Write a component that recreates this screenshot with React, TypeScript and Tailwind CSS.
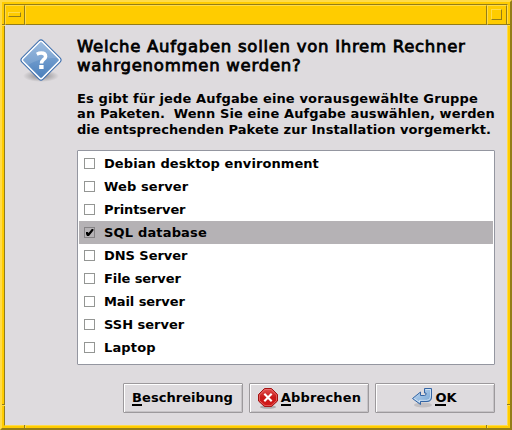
import React from "react";

const tasks = [
  { label: "Debian desktop environment", cls: "tracking-[0.08px]" },
  { label: "Web server", cls: "tracking-[0.1px]" },
  { label: "Printserver", cls: "tracking-[-0.1px]" },
  { label: "SQL database", cls: "tracking-[0.17px]", on: true },
  { label: "DNS Server", cls: "tracking-[-0.05px]" },
  { label: "File server", cls: "tracking-[-0.1px]" },
  { label: "Mail server", cls: "tracking-[-0.1px]" },
  { label: "SSH server", cls: "tracking-[0px]" },
  { label: "Laptop", cls: "tracking-[0.15px]" },
];

function QuestionIcon() {
  return (
    <svg width="46" height="46" viewBox="0 0 46 46" className="block">
      <defs>
        <linearGradient id="q" x1="0" y1="0" x2="1" y2="1">
          <stop offset="0" stopColor="#8fb3dc" />
          <stop offset="1" stopColor="#4a7fbb" />
        </linearGradient>
        <radialGradient id="qs">
          <stop offset="0" stopColor="#000" stopOpacity="0.4" />
          <stop offset="1" stopColor="#000" stopOpacity="0" />
        </radialGradient>
      </defs>
      <ellipse cx="23" cy="38" rx="18" ry="6" fill="url(#qs)" />
      <rect x="8" y="7" width="30" height="30" rx="3" transform="rotate(45 23 22)" fill="#fff" stroke="#3d6eae" strokeWidth="1" />
      <rect x="10" y="9" width="26" height="26" rx="1.2" transform="rotate(45 23 22)" fill="url(#q)" />
      <path d="M5 22 23 4.500 39 20Q22 19 10 27Z" fill="#fff" opacity="0.12" />
      <path d="M18.800 16.200Q21 15.100 23.300 15.100Q27.600 15.100 27.600 18.500Q27.600 20.400 25.300 21.800Q23.500 23.100 23.500 25.500" fill="none" stroke="#fff" strokeWidth="3.500" />
      <rect x="21.200" y="27" width="4.400" height="4" fill="#fff" />
    </svg>
  );
}

function StopIcon() {
  return (
    <svg width="22" height="22" viewBox="0 0 22 22" className="mr-[2px] block shrink-0">
      <defs>
        <linearGradient id="s" x1="0" y1="0" x2="0" y2="1">
          <stop offset="0" stopColor="#e25050" />
          <stop offset="0.5" stopColor="#c81818" />
          <stop offset="1" stopColor="#d41a1a" />
        </linearGradient>
      </defs>
      <ellipse cx="11" cy="20" rx="8" ry="1.800" fill="#000" opacity="0.22" />
      <path d="M7.500 1.500H14.500L20.500 7.500V14L14.500 19.500H7.500L1.500 14V7.500Z" fill="url(#s)" stroke="#a31212" />
      <path d="M8 2.500H14L19.500 8V13.600L14 18.600H8L2.500 13.600V8Z" fill="none" stroke="#f08080" strokeWidth="0.800" opacity="0.8" />
      <path d="M7.300 6.700 14.700 14.300M14.700 6.700 7.300 14.300" stroke="#fff" strokeWidth="2.100" />
    </svg>
  );
}

function ReturnIcon() {
  return (
    <svg width="22" height="22" viewBox="0 0 22 22" className="mr-[2px] block shrink-0">
      <defs>
        <linearGradient id="r" x1="0" y1="0" x2="1" y2="1">
          <stop offset="0" stopColor="#c5dcf3" />
          <stop offset="1" stopColor="#6f9fd0" />
        </linearGradient>
      </defs>
      <ellipse cx="12" cy="18" rx="9" ry="2.500" fill="#000" opacity="0.12" />
      <path d="M13.500 1.500H20.500V10Q20.500 14.500 16 14.500H9.500V17.500L1.500 11.500L9.500 5V8.500H13.500Q15 8.500 15 7V6H13.500Z" fill="url(#r)" stroke="#3465a4" strokeLinejoin="round" />
      <path d="M14.500 2.500H19.500V9.500Q19.500 13.300 15.500 13.300H8.500V15.200L3.200 11.500" fill="none" stroke="#e5f1fb" strokeWidth="0.700" />
    </svg>
  );
}

function Button({ hot, rest, icon, cls }: { hot: string; rest: string; icon?: React.ReactNode; cls?: string }) {
  return (
    <button className="flex h-[30px] w-[120px] items-center justify-center rounded-[1px] border border-[#9c999c] bg-[#dedbde] text-[13px] leading-4 font-bold text-black shadow-[inset_1px_1px_0_#fff,inset_-1px_-1px_0_#c6c3c6]">
      {icon}
      <span className={"whitespace-nowrap " + (cls ?? "")}>
        <span className="inline-block h-4 border-b-2 border-black">{hot}</span>
        {rest}
      </span>
    </button>
  );
}

export default function App() {
  return (
    <div className="relative h-[430px] w-[512px] overflow-hidden border-t-2 border-r-2 border-b-2 border-l-2 border-t-[#ffdb4a] border-r-[#947d18] border-b-[#947d18] border-l-[#ffdb4a] bg-[#ffcc00] p-[2px] font-['DejaVu_Sans','Bitstream_Vera_Sans',sans-serif] text-black">
      <div className="flex h-[422px] w-[504px] flex-col border border-t-[#947d18] border-r-[#ffdb4a] border-b-[#ffdb4a] border-l-[#947d18] bg-[#dedbde]">
        <div className="flex h-5 shrink-0 bg-[#ffcc00]">
          <div className="flex w-5 items-start border border-t-[#ffdb4a] border-r-[#947d18] border-b-[#947d18] border-l-[#ffdb4a] pt-[6px] pl-[2px]">
            <div className="h-[5px] w-[13px] border border-t-[#ffdb4a] border-r-[#947d18] border-b-[#947d18] border-l-[#ffdb4a]" />
          </div>
          <div className="flex-1 border border-t-[#ffdb4a] border-r-[#947d18] border-b-[#947d18] border-l-[#ffdb4a]" />
          <div className="flex w-5 items-start border border-t-[#ffdb4a] border-r-[#947d18] border-b-[#947d18] border-l-[#ffdb4a] pt-[3px] pl-[3px]">
            <div className="h-[11px] w-[11px] border border-t-[#ffdb4a] border-r-[#947d18] border-b-[#947d18] border-l-[#ffdb4a]" />
          </div>
        </div>
        <div className="flex">
          <div className="w-[72px] shrink-0 pt-[13px] pl-[13px]">
            <QuestionIcon />
          </div>
          <div className="w-[418px] shrink-0 pt-[12px]">
            <h1 className="text-[16.5px] leading-[19px] font-normal whitespace-nowrap [-webkit-text-stroke:0.8px_black]">
              <span className="block tracking-[0.72px]">Welche Aufgaben sollen von Ihrem Rechner</span>
              <span className="block tracking-[0.74px]">wahrgenommen werden?</span>
            </h1>
            <p className="mt-[16px] text-[13px] leading-[15px] font-bold whitespace-nowrap">
              <span className="block tracking-[0.14px]">Es gibt für jede Aufgabe eine vorausgewählte Gruppe</span>
              <span className="block tracking-[0.11px]">
                an Paketen. <span className="ml-[4px]">Wenn Sie eine Aufgabe auswählen, werden</span>
              </span>
              <span className="block leading-[17px] tracking-[0.05px]">die entsprechenden Pakete zur Installation vorgemerkt.</span>
            </p>
            <div className="mt-[12px] h-[215px] rounded-[1px] border border-[#9496a0] bg-white p-px">
              {tasks.map((t) => (
                <div key={t.label} className={"flex h-[23px] items-center pl-[5px] " + (t.on ? "bg-[#b5b2b5]" : "")}>
                  <span className={"h-[11px] w-[11px] border " + (t.on ? "border-[#848284]" : "border-[#949694]")}>
                    {t.on && (
                      <svg width="9" height="9" viewBox="0 0 9 9" className="block">
                        <path d="M1 4H2.800L3.500 5 6.800 1H8.400V2.600L4 8H2L1 6Z" fill="#000" />
                      </svg>
                    )}
                  </span>
                  <span className={"ml-[9px] text-[13px] leading-[15px] font-bold " + t.cls}>{t.label}</span>
                </div>
              ))}
            </div>
            <div className="mt-[18px] ml-[46px] flex gap-[6px]">
              <Button hot="B" rest="eschreibung" cls="-ml-px tracking-[0.05px]" />
              <Button hot="A" rest="bbrechen" icon={<StopIcon />} cls="tracking-[0.15px]" />
              <Button hot="O" rest="K" icon={<ReturnIcon />} cls="mr-[2px]" />
            </div>
          </div>
        </div>
      </div>
      <div className="absolute top-[22px] -left-px h-[2px] w-1 border-t border-b border-t-[#947d18] border-b-[#ffdb4a]" />
      <div className="absolute top-[402px] -left-px h-[2px] w-1 border-t border-b border-t-[#947d18] border-b-[#ffdb4a]" />
      <div className="absolute top-[22px] -right-px h-[2px] w-1 border-t border-b border-t-[#947d18] border-b-[#ffdb4a]" />
      <div className="absolute top-[402px] -right-px h-[2px] w-1 border-t border-b border-t-[#947d18] border-b-[#ffdb4a]" />
      <div className="absolute -bottom-px left-[22px] h-1 w-[2px] border-r border-l border-r-[#ffdb4a] border-l-[#947d18]" />
      <div className="absolute -bottom-px left-[484px] h-1 w-[2px] border-r border-l border-r-[#ffdb4a] border-l-[#947d18]" />
    </div>
  );
}
